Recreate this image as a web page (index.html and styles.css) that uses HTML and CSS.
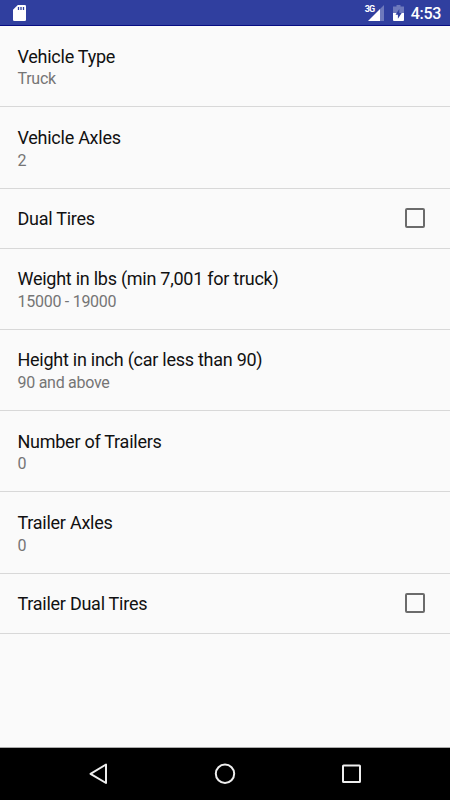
FILE: index.html
```html
<!DOCTYPE html>
<html lang="en">
<head>
<meta charset="utf-8">
<title>Vehicle Settings</title>
<link rel="stylesheet" href="styles.css">
</head>
<body>
<header class="status">
  <svg class="sd" width="13" height="16" viewBox="0 0 13 16"><path fill="#fff" d="M4.8 0H11.7Q13 0 13 1.3V14.7Q13 16 11.7 16H1.3Q0 16 0 14.7V4.8Z"/><path stroke="#303f9f" stroke-width="1.3" d="M5.5 2v3M8 2v3M10.5 2v3"/></svg>
  <span class="net">3G</span>
  <svg class="signal" width="16" height="16" viewBox="0 0 16 16"><path fill="#fff" fill-opacity=".3" d="M12 4L16 0V16H12Z"/><path fill="#fff" d="M0 16L12 4V16Z"/></svg>
  <svg class="battery" width="11" height="16" viewBox="0 0 11 16"><path fill="#fff" fill-opacity=".3" d="M3.5 0H7.5V1.6H11V8H0V1.6H3.5Z"/><path fill="#fff" d="M0 8H11V15Q11 16 10 16H1Q0 16 0 15Z"/><path fill="#303f9f" d="M6.3 4L2.5 9.8H4.9V13.8L8.7 8H6.3Z"/></svg>
  <time>4:53</time>
</header>
<main>
  <section class="row"><h2>Vehicle Type</h2><p>Truck</p></section>
  <section class="row"><h2>Vehicle Axles</h2><p>2</p></section>
  <section class="row check"><h2>Dual Tires</h2><span class="box"></span></section>
  <section class="row"><h2>Weight in lbs (min 7,001 for truck)</h2><p>15000 - 19000</p></section>
  <section class="row"><h2>Height in inch (car less than 90)</h2><p>90 and above</p></section>
  <section class="row"><h2>Number of Trailers</h2><p>0</p></section>
  <section class="row"><h2>Trailer Axles</h2><p>0</p></section>
  <section class="row check"><h2>Trailer Dual Tires</h2><span class="box"></span></section>
</main>
<nav>
  <svg width="450" height="52" viewBox="0 0 450 52" fill="none" stroke="#eee" stroke-width="2"><path stroke-linejoin="round" d="M106 16.5V35L90.5 25.8Z"/><circle cx="225" cy="25.8" r="9.2"/><rect x="343" y="17.5" width="17" height="16.5" rx=".6"/></svg>
</nav>
</body>
</html>
```
FILE: styles.css
```css
* { box-sizing: border-box; margin: 0; }
body { width: 450px; height: 800px; display: flex; flex-direction: column; overflow: hidden; background: #fafafa; font-family: Roboto, sans-serif; }
.status { height: 26px; flex: none; background: #303f9f; border-bottom: 1px solid #070d83; color: #fff; display: flex; align-items: center; padding: 1px 9px 0 13px; }
.net { margin-left: auto; align-self: flex-start; margin-top: 3px; width: 11px; font-size: 9px; line-height: 11px; font-weight: 700; letter-spacing: -.8px; }
.signal { margin-left: -8px; }
.battery { margin: 0 7px 0 9px; }
time { font-size: 16px; font-weight: 500; line-height: 26px; padding-top: 2px; letter-spacing: -.3px; }
main { flex: 1; border-bottom: 1px solid #aaa; }
.row { height: 81.25px; padding: 19.7px 25px 0 17.5px; border-bottom: 1px solid #d8d8d8; }
h2 { font-size: 18px; line-height: 22px; font-weight: 400; color: #111; letter-spacing: -.26px; }
p { font-size: 16px; line-height: 20px; color: #757575; margin-top: 1.6px; letter-spacing: -.27px; }
.row.check { height: 60px; padding-top: 0; display: flex; align-items: center; justify-content: space-between; }
.check h2 { padding-top: 2px; }
.box { width: 20px; height: 20px; border: 2px solid #6b6b6b; border-radius: 2px; }
nav { height: 52px; flex: none; background: #000; }
nav svg { display: block; }
```
